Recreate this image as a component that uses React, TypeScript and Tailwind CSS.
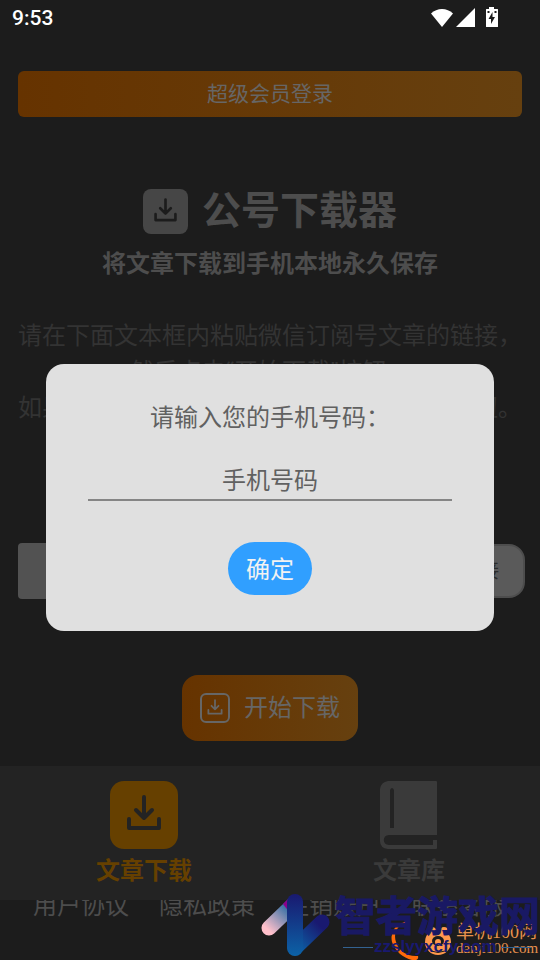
import { useState } from "react";

const footerLinks = ["用户协议", "隐私政策", "注销账户", "联系客服"];

function DownloadGlyph({ className }: { className?: string }) {
  return (
    <svg viewBox="0 0 68 68" className={className} fill="none" stroke="currentColor" strokeWidth="4" strokeLinecap="round" strokeLinejoin="round" aria-hidden="true">
      <path d="M34 16v21M26 29l8 8 8-8" />
      <path d="M19 38v9h30v-9" />
    </svg>
  );
}

function StatusBar() {
  return (
    <header className="flex h-9 items-center justify-between pr-10 pl-3 text-white">
      <span className="text-[21px] leading-9 font-medium">9:53</span>
      <svg viewBox="0 0 70 22" className="h-[22px] w-[70px]" fill="currentColor" aria-hidden="true">
        <path d="M1 6.500C7 .5 17 .5 23 6.500L12 20Z" />
        <path d="M45 1v19H26Z" />
        <path d="M59 0h5v2h3.500q.5 0 .5.500v17q0 .5-.5.500h-11q-.5 0-.5-.500v-17q0-.5.5-.500H59Z" />
        <path d="M62.500 5 58.500 12H61v5l4-7h-2.500Z" fill="#1c1c1c" />
        <path d="M57.500 4h2v2h-2ZM64.500 4h2v2h-2Z" fill="#1c1c1c" />
      </svg>
    </header>
  );
}

function PhoneDialog() {
  const [phone, setPhone] = useState("");

  return (
    <div className="absolute inset-0 z-20 flex items-center justify-center px-[46px] pt-[35px]">
      <form
        role="dialog"
        aria-modal="true"
        onSubmit={(e) => e.preventDefault()}
        className="flex w-full flex-col items-center rounded-[18px] bg-[#e0e0e0] px-[42px] pt-9 pb-9 text-2xl text-[#616161]"
      >
        <label htmlFor="phone" className="leading-9">请输入您的手机号码&#xFF1A;</label>
        <input
          id="phone"
          type="tel"
          value={phone}
          onChange={(e) => setPhone(e.target.value)}
          placeholder="手机号码"
          className="mt-[23px] h-[42px] w-full border-b-2 border-[#858585] bg-transparent pt-1 text-center placeholder:text-[#616161] focus:outline-none"
        />
        <button type="submit" className="mt-[41px] h-[53px] rounded-full bg-[#309fff] px-[18px] pt-0.5 text-[#f2f2f2]">
          确定
        </button>
      </form>
    </div>
  );
}

function Watermark() {
  return (
    <div className="pointer-events-none absolute right-0 bottom-0 z-30">
      <svg viewBox="260 890 280 70" className="h-[70px] w-[280px]">
        <defs>
          <linearGradient id="pink" gradientUnits="userSpaceOnUse" x1="264" y1="932" x2="294" y2="900">
            <stop offset="0.1" stopColor="#ffc0cb" />
            <stop offset="0.8" stopColor="#2b6ca3" />
          </linearGradient>
          <linearGradient id="blue" x1="0" y1="0" x2="0" y2="1">
            <stop offset="0" stopColor="#191970" />
            <stop offset="1" stopColor="#0c62a6" />
          </linearGradient>
          <linearGradient id="navy" gradientUnits="userSpaceOnUse" x1="292" y1="952" x2="326" y2="918">
            <stop offset="0.1" stopColor="#0c62a6" />
            <stop offset="0.8" stopColor="#191970" />
          </linearGradient>
        </defs>

        {/* orange swirl and mascot */}
        <path d="M408 921c-14 3-18 12-16 21 3 9 11 16 20 18 4 1 7-1 6-4-11 1-19-5-22-14-3-9 1-17 12-20Z" fill="#ff6a0a" />
        <g fill="#ff984d">
          <circle cx="432" cy="931" r="4" />
          <circle cx="444" cy="931" r="4" />
          <ellipse cx="438" cy="942" rx="13" ry="13" />
        </g>
        <ellipse cx="438" cy="941" rx="6" ry="5" fill="#1c1c1c" />
        <circle cx="438" cy="942" r="3" fill="#ff984d" />
        <path d="M431 951q7 3 14 0" stroke="#1c1c1c" fill="none" />

        <text x="456" y="938" fontSize="18" fill="#e8924f" fontFamily="'Liberation Serif', 'Noto Sans CJK SC', serif">单机100网</text>
        <text x="456" y="953" fontSize="15" fill="#e8924f" fontFamily="'Liberation Serif', serif">danji100.com</text>

        {/* ribbon logo */}
        <path d="M269 928 295 903" stroke="url(#pink)" strokeWidth="15" strokeLinecap="round" />
        <path d="M283 904 290 897v16Z" fill="#8b008b" />
        <path d="M295 948 322 922" stroke="url(#navy)" strokeWidth="15" strokeLinecap="round" />
        <rect x="287" y="894" width="16" height="62" rx="8" fill="url(#blue)" />

        <text x="335" y="931" fontSize="41" fontWeight="700" fill="#191964" stroke="#191964" strokeWidth="1" fontFamily="'Noto Sans CJK SC', sans-serif">智者游戏网</text>
        <path d="M343 947.500h30M501 947.500h30" stroke="#336291" />
        <text x="374" y="952" fontSize="17" fontWeight="700" fill="#191970" fontFamily="'Liberation Sans', sans-serif">zzslyyxcfy.com</text>
      </svg>
    </div>
  );
}

export default function App() {
  const [link, setLink] = useState("");

  return (
    <div className="relative min-h-screen overflow-hidden bg-[#1c1c1c] font-[Roboto,'Noto_Sans_CJK_SC',sans-serif] text-[#4d4d4d]">
      <StatusBar />

      <main className="flex flex-col items-center px-[18px] pt-[35px]">
        <button className="h-[46px] w-full rounded-md bg-linear-to-r from-[#663300] to-[#66400f] pt-0.5 text-[21px] text-[#666]">
          超级会员登录
        </button>

        <div className="mt-[72px] flex h-[45px] items-center gap-3.5">
          <span className="size-[45px] rounded-lg bg-[#464646] text-[#1c1c1c]">
            <DownloadGlyph className="size-[45px]" />
          </span>
          <h1 className="text-[39px] leading-[45px] font-bold">公号下载器</h1>
        </div>
        <p className="mt-3 text-2xl leading-9 font-bold">将文章下载到手机本地永久保存</p>

        <div className="mt-9 text-center text-2xl leading-9 whitespace-nowrap text-[#333]">
          <p>请在下面文本框内粘贴微信订阅号文章的链接&#xFF0C;</p>
          <p>然后点击“开始下载”按钮。</p>
          <p>如果您已经是超级会员&#xFF0C;请点击上方登录按钮。</p>
        </div>

        <div className="-mr-[3px] mt-[117px] flex items-center gap-3 self-stretch">
          <input
            aria-label="文章链接"
            value={link}
            onChange={(e) => setLink(e.target.value)}
            className="h-14 min-w-0 flex-1 rounded bg-[#525252] px-3 text-xl text-[#1c1c1c] focus:outline-none"
          />
          <button className="h-[54px] rounded-2xl border-2 border-[#4d4d4d] bg-[#5a5a5a] px-6 text-xl text-[#2b2b2b]">
            粘贴链接
          </button>
        </div>

        <button className="mt-[76px] flex h-[66px] items-center gap-3.5 rounded-2xl bg-linear-to-r from-[#663300] to-[#66400f] px-[18px] text-2xl text-[#666]">
          <span className="flex size-[30px] items-center justify-center rounded-md border-2 border-[#666]">
            <DownloadGlyph className="size-[30px] shrink-0" />
          </span>
          开始下载
        </button>
      </main>

      <nav className="relative z-10 mt-[25px] flex h-[134px] bg-[#232323] text-2xl font-bold">
        <button className="flex w-1/2 flex-col items-center pt-[15px] pl-[18px] text-[#664000]">
          <span className="size-[68px] rounded-[14px] bg-[#664000] text-[#232323]">
            <DownloadGlyph className="size-[68px]" />
          </span>
          <span className="mt-1 leading-9">文章下载</span>
        </button>
        <button className="flex w-1/2 flex-col items-center pt-[15px] pl-2 text-[#3a3a3a]">
          <svg viewBox="0 0 58 68" className="h-[68px] w-[58px]" aria-hidden="true">
            <path d="M8 0h48q1 0 1 1v53H9c-7 0-7 10 0 10h44v-5h4v8q0 1-1 1H8q-8-1-8-8V8Q1 1 8 0Z" fill="currentColor" />
            <path d="M10 47V9q2-4 4 0v38Z" fill="#232323" />
          </svg>
          <span className="mt-1 leading-9">文章库</span>
        </button>
      </nav>

      <footer className="-mt-3 flex justify-center gap-[30px] text-2xl leading-9 whitespace-nowrap text-[#4d4d4d]">
        {footerLinks.map((item) => (
          <a key={item} href="#">{item}</a>
        ))}
      </footer>

      <PhoneDialog />
      <Watermark />
    </div>
  );
}
